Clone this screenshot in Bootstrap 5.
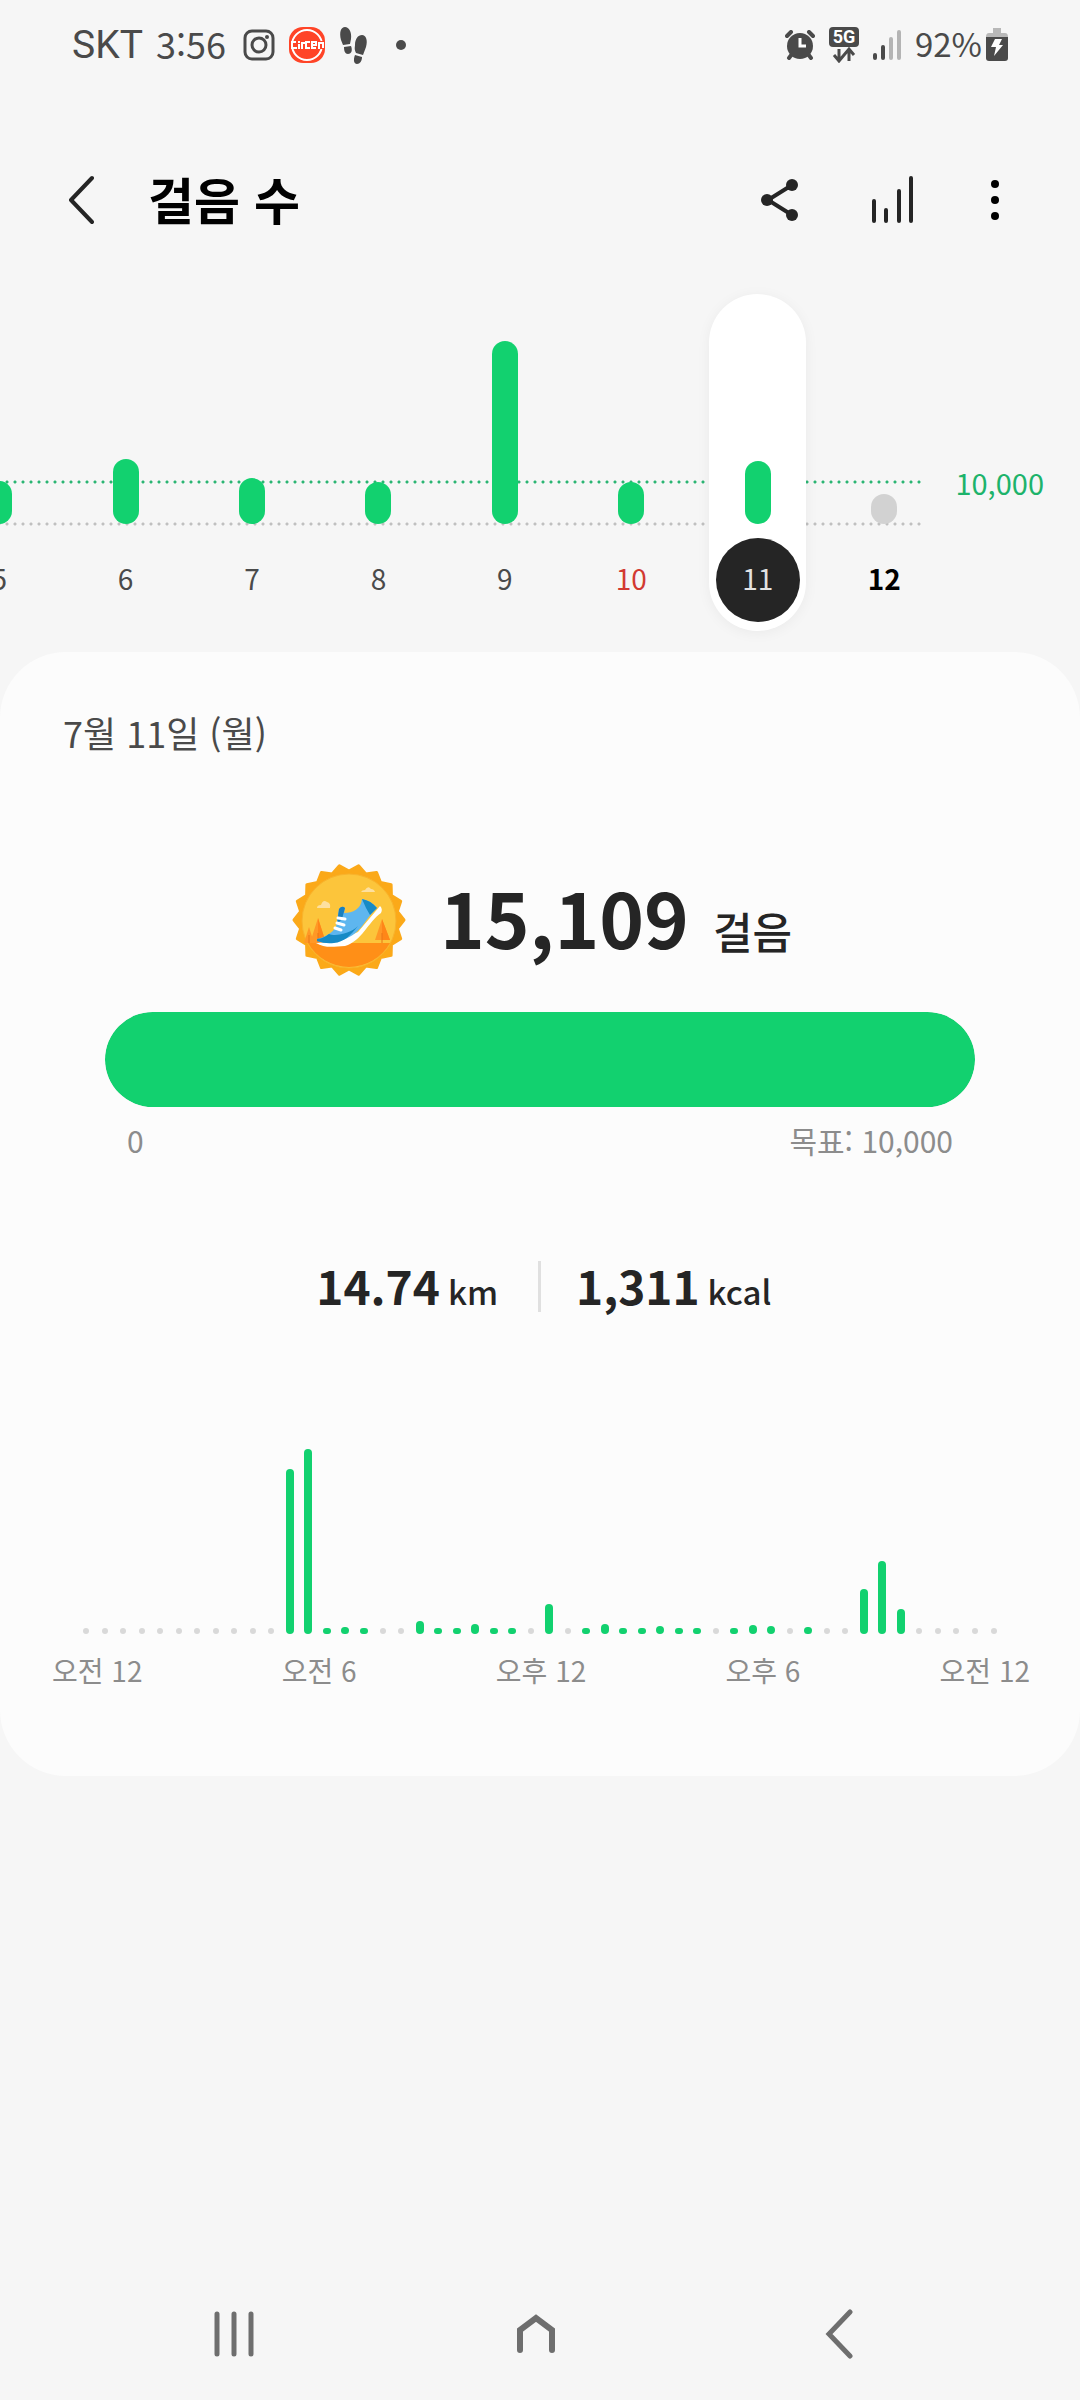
<!DOCTYPE html>
<html lang="ko">
<head>
<meta charset="utf-8">
<meta name="viewport" content="width=device-width, initial-scale=1">
<title>걸음 수</title>
<link href="https://cdn.jsdelivr.net/npm/bootstrap@5.3.0/dist/css/bootstrap.min.css" rel="stylesheet">
<style>
  :root { --step-green: #12d16f; --ink: #252525; --soft-ink: #4a4a4a; --muted: #8c8c8c; }
  body { background: #f6f6f6; color: var(--ink); font-family: "Noto Sans CJK KR", "Noto Sans", sans-serif; font-size: 28px; line-height: 40px; }
  svg { display: block; flex: none; }
  .plain { border: 0; background: none; padding: 0; color: inherit; }

  .status { height: 90px; padding: 0 72px; color: var(--soft-ink); }
  .status-start { gap: 13px; }
  .status-end { gap: 13px; }
  .carrier { font-family: Roboto, sans-serif; font-size: 39px; }
  .clock { font-size: 36px; padding-bottom: 4px; }
  .battery-level { font-size: 33px; padding-bottom: 4px; }
  .more-dot { margin-left: 14px; }

  .app-bar { height: 110px; margin-top: 55px; padding: 0 77px 0 68px; }
  .app-title { font-size: 50px; line-height: 64px; padding-bottom: 4px; font-weight: 700; color: #000; margin-left: 54px; }
  .app-actions { gap: 72px; }

  .week { margin-top: 39px; padding-right: 36px; }
  .week-plot {
    background:
      radial-gradient(circle, #2bb573 1px, transparent 2px) 3px 184px / 8px 8px repeat-x,
      radial-gradient(circle, #c0c0c0 1px, transparent 2px) 3px 226px / 8px 8px repeat-x;
  }
  .week-days { margin: 0 -24px 0 -64px; }
  .day { width: 97px; height: 337px; padding-bottom: 9px; border-radius: 49px; }
  .day-bar { width: 26px; border-radius: 13px; background: var(--step-green); }
  .day-label { width: 84px; height: 84px; margin-top: 14px; padding-bottom: 4px; border-radius: 50%; color: var(--soft-ink); }
  .day.selected { background: #fff; box-shadow: 0 2px 14px rgba(0, 0, 0, .05); }
  .selected .day-label { background: var(--ink); color: #e2e2e2; }
  .sunday .day-label { color: #d23a32; }
  .today .day-label { color: #000; font-weight: 700; }
  .today .day-bar { background: #d2d2d2; }
  .goal-tag { margin: 168px 0 0 32px; font-size: 29px; color: #1db36b; }

  .panel { margin-top: 21px; padding: 56px 50px 86px 52px; border-radius: 66px; background: #fcfcfc; }
  .date { font-size: 36px; line-height: 48px; margin: 0 0 107px 11px; color: var(--soft-ink); }
  .total { height: 114px; gap: 34px; padding-left: 2px; }
  .total-text { padding-bottom: 8px; }
  .total-value { font-size: 76px; line-height: 96px; font-weight: 700; }
  .total-unit { font-size: 43px; font-weight: 500; margin-left: 24px; }
  .goal { margin: 35px 55px 0 53px; }
  .goal .progress { height: 95px; border-radius: 48px; background: #e8e8e8; }
  .goal .progress-bar { background: var(--step-green); border-radius: 48px; }
  .goal-scale { font-size: 30px; margin-top: 13px; padding: 0 22px; color: var(--muted); }
  .stats { height: 51px; margin-top: 101px; padding-right: 3px; }
  .stats-value { font-size: 46px; line-height: 48px; font-weight: 700; }
  .stats-unit { font-size: 33px; font-weight: 500; }
  .stats-distance { padding-right: 40px; }
  .stats-energy { padding-left: 35px; }
  .stats-rule { width: 3px; background: #e0e0e0; }
  .stats-half { flex: 1 1 50%; }
  .hours { height: 186px; margin: 136px 27px 0 25px; }
  .hour { width: 8px; border-radius: 4px; background: var(--step-green); }
  .hour.idle { width: 6px; height: 6px; background: #d9d9d9; }
  .hour-scale { margin-top: 16px; color: var(--muted); }

  .nav-keys { height: 132px; padding: 0 90px 0 83px; }
</style>
</head>
<body>
<div class="d-flex flex-column min-vh-100 overflow-hidden">

  <div class="status d-flex align-items-center justify-content-between">
    <div class="status-start d-flex align-items-center">
      <span class="carrier">SKT</span>
      <span class="clock">3:56</span>
      <svg class="ms-1" width="32" height="32" viewBox="0 0 32 32" fill="none" stroke="#4a4a4a" stroke-width="3"><rect x="2" y="2" width="28" height="28" rx="7"/><circle cx="16" cy="16" r="7"/><circle cx="24" cy="8" r="2" fill="#4a4a4a" stroke="none"/></svg>
      <svg width="38" height="38" viewBox="0 0 38 38"><rect x="1" y="1" width="36" height="36" rx="14" fill="#ff4427"/><circle cx="19" cy="19" r="15" fill="none" stroke="#fff" stroke-width="2"/><path fill="#ff4427" d="M2 15h34v8H2z"/><g fill="none" stroke="#fff" stroke-width="2"><path d="M8 16H4v6h5M11 18v5M11 15v2M14 23v-6h3M22 16h-4v6h4M28 22h-4v-6h4v3h-4M31 23v-6h4v5"/></g></svg>
      <svg width="30" height="38" viewBox="0 0 30 38" fill="#4a4a4a"><path d="M2 14C0 6 2 1 6 1s7 5 6 12l-1 5-7 1zM5 21l7-1c2 5 0 8-3 8s-4-3-4-7zM17 27c-2-4-1-6-1-8 0-6 3-10 7-10s6 5 4 12l-3 8zM16 29l7 2c0 4-2 7-5 7s-4-4-2-9z"/></svg>
      <svg class="more-dot" width="10" height="10" viewBox="0 0 10 10"><circle cx="5" cy="5" r="5" fill="#4a4a4a"/></svg>
    </div>
    <div class="status-end d-flex align-items-center">
      <svg width="30" height="30" viewBox="0 0 30 30"><g stroke="#4a4a4a" stroke-width="4" stroke-linecap="round"><path d="M2 6l4-4M28 6l-4-4M7 24l-3 4M23 24l3 4"/></g><circle cx="15" cy="16" r="13" fill="#4a4a4a"/><path d="M15 8v8h6" fill="none" stroke="#fff" stroke-width="3"/></svg>
      <svg width="32" height="36" viewBox="0 0 32 36"><rect x="1" y="0" width="30" height="20" rx="4" fill="#4a4a4a"/><text x="16" y="16" text-anchor="middle" font-family="Roboto, sans-serif" font-size="18" font-weight="700" fill="#fff">5G</text><path d="M11 22v11M6 28l5 6 5-6M21 34V23M16 28l5-6 5 6" fill="none" stroke="#4a4a4a" stroke-width="3"/></svg>
      <svg width="29" height="30" viewBox="0 0 29 30" stroke-width="4" stroke-linecap="round" stroke="#4a4a4a"><path d="M2 25v3M10 17v11"/><path d="M18 9v19M26 2v26" stroke="#b4b4b4"/></svg>
      <div class="d-flex align-items-center gap-1">
        <span class="battery-level">92%</span>
        <svg width="22" height="34" viewBox="0 0 22 34"><path d="M7 0h8v5h4q3 0 3 4H0q0-4 3-4h4z" fill="#b8b8b8"/><path d="M0 9h22v21q0 3-3 3H3q-3 0-3-3z" fill="#4a4a4a"/><path d="M9 11h7l-3 6h4L8 28l2-9H5z" fill="#fff"/></svg>
      </div>
    </div>
  </div>

  <header class="app-bar d-flex align-items-center">
    <button class="plain" aria-label="뒤로"><svg width="26" height="50" viewBox="0 0 26 50" fill="none" stroke="#252525" stroke-width="4" stroke-linecap="round" stroke-linejoin="round"><path d="M24 3L3 25l21 22"/></svg></button>
    <h1 class="app-title mb-0">걸음 수</h1>
    <div class="app-actions d-flex align-items-center ms-auto">
      <button class="plain" aria-label="공유"><svg width="38" height="44" viewBox="0 0 38 44" fill="#252525"><path d="M31 7L7 22l24 15" fill="none" stroke="#252525" stroke-width="4"/><circle cx="6" cy="22" r="6"/><circle cx="31" cy="7" r="6"/><circle cx="31" cy="37" r="6"/></svg></button>
      <button class="plain" aria-label="차트"><svg width="44" height="48" viewBox="0 0 44 48" stroke="#252525" stroke-width="4" stroke-linecap="round"><path d="M3 25v20M15 34v11M28 15v30M40 2v43"/></svg></button>
      <button class="plain" aria-label="더보기"><svg width="16" height="42" viewBox="0 0 16 42"><circle cx="8" cy="5" r="4"/><circle cx="8" cy="21" r="4"/><circle cx="8" cy="37" r="4"/></svg></button>
    </div>
  </header>

  <section class="week d-flex align-items-start">
    <div class="week-plot flex-grow-1">
      <div class="week-days d-flex" id="days"></div>
    </div>
    <div class="goal-tag">10,000</div>
  </section>

  <main class="panel">
    <p class="date">7월 11일 (월)</p>

    <div class="total d-flex align-items-center justify-content-center">
      <svg width="114" height="114" viewBox="0 0 114 114">
        <polygon id="medal-edge" fill="#fba919" stroke="#fba919" stroke-width="3" stroke-linejoin="round"/>
        <circle cx="57" cy="58" r="47" fill="#fcc53b" stroke="#f8b32c" stroke-width="1"/>
        <path d="M16 80h82a47 47 0 0 1-82 0z" fill="#ff8f17"/>
        <path d="M26 55l8 25H18zM17 64l5 16H12zM90 56l8 21H83z" fill="#ff9826"/>
        <path d="M26 55l8 25h-8zM90 56l8 21h-8z" fill="#ff8618"/><path d="M26 70v10M17 72v8M90 70v10" stroke="#e97716" stroke-width="1"/>
        <path d="M25 45q0-3 4-3 2-6 6-3 4 1 3 6zM69 29q1-2 4-2 3-5 6-1 3 0 4 3z" fill="#fde0a0"/>
        <path d="M24 80c8 5 16 4 29 3 17-5 23-24 36-33q2-4-1-7L66 69 46 78z" fill="#fff"/>
        <path d="M25 76c8-2 15-6 19-12l3-18q3-4 6-1l-1 5c9 0 17-4 18-14 6 1 11 4 15 9C72 57 70 70 51 77q-14 5-26 1z" fill="#5eb6ef"/>
        <path d="M25 76c5 0 9-3 12-5 7 3 22-1 29-8-8 10-14 16-24 17q-9 1-17-2zM70 36c6 1 11 4 15 9l-7 7-4-7z" fill="#178ac5"/>
        <path d="M47 46q3-4 6-1l-3 11-5 5z" fill="#197fbd"/>
        <path d="M46 55l7 1M45 60l7 2M43 65l6 2" stroke="#fff" stroke-width="3" stroke-linecap="round"/>
      </svg>
      <div class="total-text d-flex align-items-baseline"><span class="total-value">15,109</span><span class="total-unit">걸음</span></div>
    </div>

    <div class="goal">
      <div class="progress" role="progressbar" aria-label="걸음 목표" aria-valuenow="100" aria-valuemin="0" aria-valuemax="100"><div class="progress-bar w-100"></div></div>
      <div class="goal-scale d-flex justify-content-between"><span>0</span><span>목표: 10,000</span></div>
    </div>

    <div class="stats d-flex justify-content-center">
      <div class="stats-half stats-distance d-flex align-items-baseline justify-content-end gap-2"><span class="stats-value">14.74</span><span class="stats-unit">km</span></div>
      <div class="stats-rule"></div>
      <div class="stats-half stats-energy d-flex align-items-baseline gap-2"><span class="stats-value">1,311</span><span class="stats-unit">kcal</span></div>
    </div>

    <div class="hours d-flex align-items-end" id="hours"></div>
    <div class="hour-scale d-flex justify-content-between"><span>오전 12</span><span>오전 6</span><span>오후 12</span><span>오후 6</span><span>오전 12</span></div>
  </main>

  <nav class="nav-keys d-flex align-items-center mt-auto">
    <button class="plain col d-flex justify-content-center" aria-label="최근 앱"><svg width="40" height="46" viewBox="0 0 40 46" stroke="#6e6e6e" stroke-width="5" stroke-linecap="round"><path d="M3 3v40M20 3v40M37 3v40"/></svg></button>
    <button class="plain col d-flex justify-content-center" aria-label="홈"><svg width="40" height="40" viewBox="0 0 40 40" fill="none" stroke="#6e6e6e" stroke-width="6" stroke-linecap="round"><path d="M4 36V16L20 4l16 12v20"/></svg></button>
    <button class="plain col d-flex justify-content-center" aria-label="뒤로"><svg width="28" height="50" viewBox="0 0 28 50" fill="none" stroke="#6e6e6e" stroke-width="5" stroke-linecap="round"><path d="M25 3L4 25l21 22"/></svg></button>
  </nav>
</div>

<script src="https://cdn.jsdelivr.net/npm/bootstrap@5.3.0/dist/js/bootstrap.bundle.min.js"></script>
<script>
  // Daily bars: label, bar height, state
  const days = [[5, 43], [6, 65], [7, 46], [8, 42], [9, 183], [10, 42, 'sunday'], [11, 63, 'selected'], [12, 30, 'today']];
  document.getElementById('days').innerHTML = days.map(([label, height, state = '']) =>
    `<div class="col d-flex justify-content-center"><button class="plain day ${state} d-flex flex-column align-items-center justify-content-end">
      <span class="day-bar" style="height:${height}px"></span>
      <span class="day-label d-flex align-items-center justify-content-center">${label}</span></button></div>`).join('');

  // Half-hour bars, 0 means no steps
  const hours = [0,0,0,0,0,0,0,0,0,0,0,165,185,6,7,6,0,0,13,6,6,10,6,6,0,30,0,6,10,6,6,8,6,6,0,6,9,8,0,7,0,0,45,73,25,0,0,0,0,0];
  document.getElementById('hours').innerHTML = hours.map(h =>
    `<div class="col d-flex justify-content-center">${h ? `<div class="hour" style="height:${h}px"></div>` : '<div class="hour idle"></div>'}</div>`).join('');

  // Eighteen-pointed rim of the medal
  const points = [];
  for (let i = 0; i < 36; i++) {
    const a = i * Math.PI / 18, r = i % 2 ? 49 : 55;
    points.push((57 + r * Math.cos(a)).toFixed(1) + ',' + (57 + r * Math.sin(a)).toFixed(1));
  }
  document.getElementById('medal-edge').setAttribute('points', points.join(' '));
</script>
</body>
</html>
